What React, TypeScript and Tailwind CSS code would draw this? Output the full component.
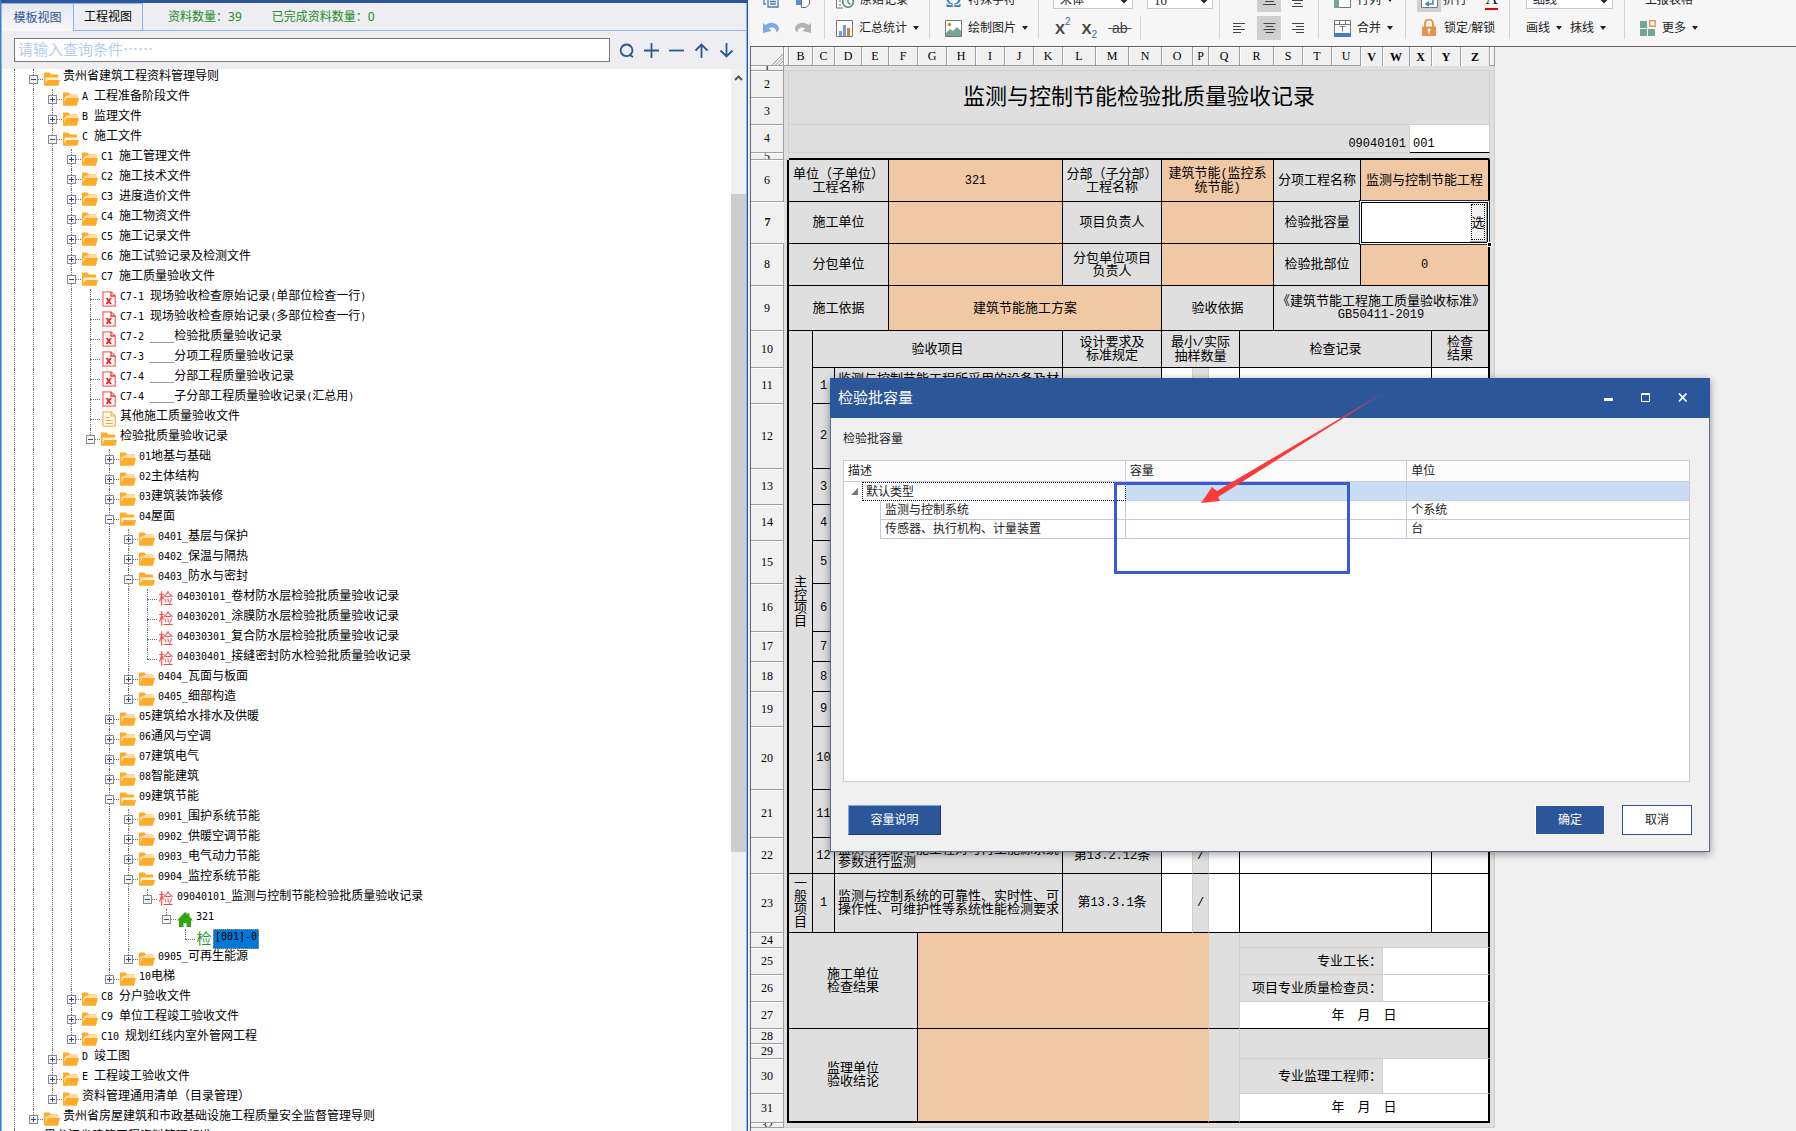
import type { ReactNode } from 'react';
import { clsx } from 'clsx';

type NodeIcon = 'folder' | 'excel' | 'doc' | 'check' | 'checkDone' | 'home';

interface TreeNode {
  level: number;
  text: string;
  icon?: NodeIcon;
  open?: boolean;
  leaf?: boolean;
  selected?: boolean;
}

const tree: TreeNode[] = [
  { level: 1, text: '贵州省建筑工程资料管理导则', open: true },
  { level: 2, text: 'A 工程准备阶段文件' },
  { level: 2, text: 'B 监理文件' },
  { level: 2, text: 'C 施工文件', open: true },
  { level: 3, text: 'C1 施工管理文件' },
  { level: 3, text: 'C2 施工技术文件' },
  { level: 3, text: 'C3 进度造价文件' },
  { level: 3, text: 'C4 施工物资文件' },
  { level: 3, text: 'C5 施工记录文件' },
  { level: 3, text: 'C6 施工试验记录及检测文件' },
  { level: 3, text: 'C7 施工质量验收文件', open: true },
  { level: 4, text: 'C7-1 现场验收检查原始记录(单部位检查一行)', icon: 'excel', leaf: true },
  { level: 4, text: 'C7-1 现场验收检查原始记录(多部位检查一行)', icon: 'excel', leaf: true },
  { level: 4, text: 'C7-2 ____检验批质量验收记录', icon: 'excel', leaf: true },
  { level: 4, text: 'C7-3 ____分项工程质量验收记录', icon: 'excel', leaf: true },
  { level: 4, text: 'C7-4 ____分部工程质量验收记录', icon: 'excel', leaf: true },
  { level: 4, text: 'C7-4 ____子分部工程质量验收记录(汇总用)', icon: 'excel', leaf: true },
  { level: 4, text: '其他施工质量验收文件', icon: 'doc', leaf: true },
  { level: 4, text: '检验批质量验收记录', open: true },
  { level: 5, text: '01地基与基础' },
  { level: 5, text: '02主体结构' },
  { level: 5, text: '03建筑装饰装修' },
  { level: 5, text: '04屋面', open: true },
  { level: 6, text: '0401_基层与保护' },
  { level: 6, text: '0402_保温与隔热' },
  { level: 6, text: '0403_防水与密封', open: true },
  { level: 7, text: '04030101_卷材防水层检验批质量验收记录', icon: 'check', leaf: true },
  { level: 7, text: '04030201_涂膜防水层检验批质量验收记录', icon: 'check', leaf: true },
  { level: 7, text: '04030301_复合防水层检验批质量验收记录', icon: 'check', leaf: true },
  { level: 7, text: '04030401_接缝密封防水检验批质量验收记录', icon: 'check', leaf: true },
  { level: 6, text: '0404_瓦面与板面' },
  { level: 6, text: '0405_细部构造' },
  { level: 5, text: '05建筑给水排水及供暖' },
  { level: 5, text: '06通风与空调' },
  { level: 5, text: '07建筑电气' },
  { level: 5, text: '08智能建筑' },
  { level: 5, text: '09建筑节能', open: true },
  { level: 6, text: '0901_围护系统节能' },
  { level: 6, text: '0902_供暖空调节能' },
  { level: 6, text: '0903_电气动力节能' },
  { level: 6, text: '0904_监控系统节能', open: true },
  { level: 7, text: '09040101_监测与控制节能检验批质量验收记录', icon: 'check', open: true },
  { level: 8, text: '321', icon: 'home', open: true },
  { level: 9, text: '[001]-0', icon: 'checkDone', leaf: true, selected: true },
  { level: 6, text: '0905_可再生能源' },
  { level: 5, text: '10电梯' },
  { level: 3, text: 'C8 分户验收文件' },
  { level: 3, text: 'C9 单位工程竣工验收文件' },
  { level: 3, text: 'C10 规划红线内室外管网工程' },
  { level: 2, text: 'D 竣工图' },
  { level: 2, text: 'E 工程竣工验收文件' },
  { level: 2, text: '资料管理通用清单（目录管理）' },
  { level: 1, text: '贵州省房屋建筑和市政基础设施工程质量安全监督管理导则' },
  { level: 0, text: '黑龙江省建筑工程资料管理标准(DB23/T1019-2020)' },
];

// true when a later row on the same level still belongs to the same parent
function continues(index: number, level: number) {
  for (let i = index + 1; i < tree.length; i++) {
    if (tree[i].level < level) return false;
    if (tree[i].level === level) return true;
  }
  return false;
}

// latin runs are set in a monospace face at half the width of a Chinese character
function Mixed({ text, latin }: { text: string; latin: string }) {
  return text.split(/([\x20-\x7e]+)/).map((part, i) =>
    i % 2 ? (
      <span key={i} className={clsx('leading-none', latin)}>
        {part}
      </span>
    ) : (
      part
    ),
  );
}

const treeLatin = "font-['DejaVu_Sans_Mono'] text-[10px]";
const sheetLatin = "font-['Liberation_Mono'] text-[12px]";

function FolderIcon({ open }: { open?: boolean }) {
  return (
    <svg width="16" height="14" viewBox="0 0 16 14">
      <path d="M0 0.500h5.500l1.500 2H14v11H0z" fill="#ffab2a" />
      {open ? (
        <>
          <path d="M1.500 5.500H15v3H4l-2.500 3z" fill="#fff3dc" />
          <path d="M3.500 8H16l-1.500 5.500H0z" fill="#ffab2a" />
        </>
      ) : (
        <>
          <path d="M6 3h9v3H4L1.500 12V5z" fill="#ffdca6" />
          <path d="M3.500 6H16l-2 7.500H0.500z" fill="#ffab2a" />
        </>
      )}
    </svg>
  );
}

function TreeIcon({ node }: { node: TreeNode }) {
  switch (node.icon) {
    case 'excel':
      return (
        <svg width="16" height="16" viewBox="0 0 16 16" fill="none">
          <path d="M2 .8h8L14.200 5v10.200H2z" stroke="#f66" strokeWidth="1.300" />
          <path d="M10 1v4h4" stroke="#e33" strokeWidth="1.300" />
          <path d="M5.500 7l4.500 6M10 7l-4.500 6" stroke="#e22" strokeWidth="1.800" />
        </svg>
      );
    case 'doc':
      return (
        <svg width="16" height="16" viewBox="0 0 16 16" fill="none">
          <path d="M2 .8h8L14.200 5v10.200H2z" stroke="#ffb54a" strokeWidth="1.300" />
          <path d="M10 1v4h4M4.500 6.500h4M4.500 9.500h7.500M4.500 12.500h7.500" stroke="#ffab2a" strokeWidth="1.200" />
        </svg>
      );
    case 'check':
      return <span className="text-[15px] leading-4 text-[#f04848]">检</span>;
    case 'checkDone':
      return <span className="text-[15px] leading-4 text-[#1f9a2c]">检</span>;
    case 'home':
      return (
        <svg width="16" height="15" viewBox="0 0 16 15">
          <path d="M8 0l2.500 2.500V1.500h2v3L16 8.500h-2V15H9.500v-4h-3v4H2V8.500H0z" fill="#2fa80a" />
        </svg>
      );
    default:
      return <FolderIcon open={node.open} />;
  }
}

function TreeRow({ node, index }: { node: TreeNode; index: number }) {
  const guides = Array.from({ length: node.level }, (_, l) => continues(index, l));
  return (
    <li className="flex h-5 items-center whitespace-nowrap">
      {guides.map((on, l) => (
        <span key={l} className="flex h-5 w-[19px] shrink-0 justify-center">
          {on && <span className="h-5 border-l border-dotted border-[#707070]" />}
        </span>
      ))}
      <span className="relative h-5 w-[19px] shrink-0">
        <span
          className={clsx(
            'absolute left-[9px] top-0 border-l border-dotted border-[#707070]',
            continues(index, node.level) ? 'h-5' : 'h-[10px]',
          )}
        />
        <span className="absolute left-[9px] top-[10px] w-[10px] border-t border-dotted border-[#707070]" />
        {!node.leaf && (
          <button
            aria-label={node.open ? '收起' : '展开'}
            className="absolute left-[5px] top-[6px] h-[9px] w-[9px] border border-[#8a8a8a] bg-[#f6f6f6]"
          >
            <svg width="7" height="7" viewBox="0 0 7 7" className="block">
              <path d={node.open ? 'M1 3.5h5' : 'M1 3.5h5M3.5 1v5'} stroke="#2b4b94" />
            </svg>
          </button>
        )}
      </span>
      <span className="ml-px flex h-4 w-4 shrink-0 items-center justify-center">
        <TreeIcon node={node} />
      </span>
      {node.selected ? (
        <span className="ml-px h-5 border border-dotted border-[#e08a3c] bg-[#0078d7] px-px text-[12px] leading-[12px]">
          <Mixed text={node.text} latin={treeLatin} />
        </span>
      ) : (
        <span className="ml-[3px] self-start text-[12px] leading-[14px]">
          <Mixed text={node.text} latin={treeLatin} />
        </span>
      )}
    </li>
  );
}

function SearchTools() {
  const items: [string, string][] = [
    ['查找', 'M7.500 1.500a5.800 5.800 0 1 0 .1 0zM10 11.500l4 2.500'],
    ['展开全部', 'M7.500 0v15M0 7.500h15'],
    ['收起全部', 'M0 7.500h15'],
    ['上一个', 'M7.500 1v14M1.500 7.500l6-6 6 6'],
    ['下一个', 'M7.500 0v14M1.500 7.500l6 6 6-6'],
  ];
  return (
    <div className="flex gap-[10px]">
      {items.map(([label, d]) => (
        <button key={label} aria-label={label}>
          <svg width="15" height="15" viewBox="0 0 15 15" fill="none" stroke="#2b579a" strokeWidth="1.800">
            <path d={d} />
          </svg>
        </button>
      ))}
    </div>
  );
}

function Sidebar() {
  return (
    <aside className="flex w-[748px] shrink-0 flex-col border-x border-l-[#4a7ac8] border-r-[#2b579a] bg-[#eeedf2]">
      <div className="h-[3px] shrink-0 bg-[#2b579a]" />
      <div className="flex min-h-0 flex-1 flex-col border-x border-[#8fb4ea]">
        <div className="flex h-7 shrink-0 text-[12px]">
          <button className="w-[71px] border-t border-[#8fb4ea] bg-linear-to-b from-[#e6e6ee] to-[#f8f8fb] text-[#2b579a]">
            模板视图
          </button>
          <button className="w-[70px] border border-[#8fb4ea] text-black">工程视图</button>
          <div className="flex flex-1 items-center gap-[30px] border-b border-[#8fb4ea] pl-[25px] text-[#228b22]">
            <span>
              资料数量：<span className="font-['Noto_Sans']">39</span>
            </span>
            <span>
              已完成资料数量：<span className="font-['Noto_Sans']">0</span>
            </span>
          </div>
        </div>
        <div className="flex h-[38px] shrink-0 items-center gap-[9px] px-3">
          <input
            aria-label="查询条件"
            placeholder="请输入查询条件……"
            className="h-6 min-w-0 flex-1 border border-[#7a7a7a] bg-white px-[3px] pb-1 font-['Noto_Sans_CJK_SC',sans-serif] text-[15px] leading-5 placeholder:text-[#b4cdea]"
          />
          <SearchTools />
        </div>
        <div className="flex min-h-0 flex-1 bg-white">
          <ul className="min-w-0 flex-1 overflow-hidden pl-[3px]">
            {tree.map((node, i) => (
              <TreeRow key={i} node={node} index={i} />
            ))}
          </ul>
          <div className="flex w-[15px] shrink-0 flex-col bg-[#f0f0f0]">
            <svg width="15" height="17" viewBox="0 0 15 17" fill="none" stroke="#555" strokeWidth="2">
              <path d="M4 11l3.500-3.500L11 11" />
            </svg>
            <div className="mt-[108px] h-[658px] bg-[#cdcdcd]" />
          </div>
        </div>
      </div>
    </aside>
  );
}

function Caret() {
  return (
    <svg width="6" height="4" viewBox="0 0 6 4">
      <path d="M0 0h6L3 4z" fill="#222" />
    </svg>
  );
}

function Lines({ widths }: { widths: number[] }) {
  return (
    <svg width="13" height="11" viewBox="0 0 13 11" stroke="#444">
      {widths.map((w, i) => (
        <path key={i} d={`M${(13 - w) / 2} ${i * 3 + 0.5}h${w}`} />
      ))}
    </svg>
  );
}

function Group({ width, top, bottom, last }: { width: string; top: ReactNode; bottom: ReactNode; last?: boolean }) {
  return (
    <div className={clsx('flex h-[51px] shrink-0 flex-col gap-1', width, !last && 'border-r border-[#d4d4d4]')}>
      <div className="flex h-6 shrink-0 items-center">{top}</div>
      <div className="flex h-6 shrink-0 items-center">{bottom}</div>
    </div>
  );
}

interface ToolProps {
  icon?: ReactNode;
  text: string;
  caret?: boolean;
  className?: string;
}

function Tool({ icon, text, caret = true, className }: ToolProps) {
  return (
    <button className={clsx('flex items-center gap-[6px] whitespace-nowrap', className)}>
      {icon}
      <span>{text}</span>
      {caret && <Caret />}
    </button>
  );
}

function Toolbar() {
  return (
    <div className="h-[46px] shrink-0 overflow-hidden bg-[#f6f6f6] text-[12px] text-[#222]">
      <div className="-mt-3 flex pl-px">
        <Group
          width="w-[74px]"
          top={
            <div className="flex gap-4 pl-3">
              <button aria-label="复制">
                <svg width="16" height="16" viewBox="0 0 16 16" fill="none" stroke="#4a7ab8" strokeWidth="1.300">
                  <path d="M3 12H1V1h10v2M5 3h10v12H5zM7 7h6M7 9.500h6M7 12h6" />
                </svg>
              </button>
              <button aria-label="粘贴">
                <svg width="16" height="16" viewBox="0 0 16 16">
                  <path d="M1 1h11v12H1z" fill="#5b8fd9" />
                  <path d="M6.500 4.500h8V12L11 15.500H6.500z" fill="#fff" stroke="#667" />
                </svg>
              </button>
            </div>
          }
          bottom={
            <div className="flex gap-4 pl-3">
              <button aria-label="撤销">
                <svg width="16" height="14" viewBox="0 0 16 14">
                  <path d="M0 2l2.500 2C8-.5 15 2.500 16 7c.2 2-1 3.500-2.500 4.500C13.500 7 9 5 6 7.500L8.500 10 0 12z" fill="#7eaaea" />
                </svg>
              </button>
              <button aria-label="重做">
                <svg width="16" height="14" viewBox="0 0 16 14">
                  <path d="M16 2l-2.500 2C8-.5 1 2.500 0 7c-.2 2 1 3.500 2.500 4.500C2.500 7 7 5 10 7.500L7.500 10l8.500 2z" fill="#b2b2b2" />
                </svg>
              </button>
            </div>
          }
        />
        <Group
          width="w-[105px]"
          top={
            <Tool
              className="pl-[11px]"
              caret={false}
              text="原始记录"
              icon={
                <svg width="18" height="18" viewBox="0 0 18 18" fill="none">
                  <path d="M7 17H.5V1H13M3 14h2M3 10h2" stroke="#777" />
                  <circle cx="12" cy="11" r="5.300" stroke="#3f8a6d" strokeWidth="1.500" />
                  <path d="M12 8v3.500l2.500 2" stroke="#3f8a6d" strokeWidth="1.300" />
                </svg>
              }
            />
          }
          bottom={
            <Tool
              className="pl-[11px]"
              text="汇总统计"
              icon={
                <svg width="17" height="17" viewBox="0 0 17 17">
                  <path d="M.5.500h16v16H.5z" fill="#fff" stroke="#777" />
                  <path d="M3 11h3v5H3zM7 5h3v11H7z" fill="#6f9fe0" />
                  <path d="M11 8h3v8h-3z" fill="#dd7e27" />
                </svg>
              }
            />
          }
        />
        <Group
          width="w-[109px]"
          top={
            <Tool
              className="pl-[15px]"
              caret={false}
              text="特殊字符"
              icon={<span className="w-[17px] text-[22px] leading-6 text-[#3f7fb8]">Ω</span>}
            />
          }
          bottom={
            <Tool
              className="pl-[15px]"
              text="绘制图片"
              icon={
                <svg width="17" height="17" viewBox="0 0 17 17">
                  <path d="M.5.500h16v16H.5z" fill="#fff" stroke="#777" />
                  <circle cx="4.500" cy="4.500" r="1.700" fill="#dd7e27" />
                  <path d="M1 16v-3l4-4 3 2 4-4 4 4v5z" fill="#74a593" />
                </svg>
              }
            />
          }
        />
        <Group
          width="w-[181px]"
          top={
            <div className="flex gap-[14px] pl-[14px]">
              <select aria-label="字体" className="h-[18px] w-20 border border-[#c8c8dc] bg-white pl-[2px]">
                <option>宋体</option>
              </select>
              <select aria-label="字号" className="h-[18px] w-[66px] border border-[#c8c8dc] bg-white pl-[2px] text-[13px]">
                <option>10</option>
              </select>
            </div>
          }
          bottom={
            <div className="flex h-6 w-[102px] items-center gap-[11px] border-r border-[#d4d4d4] pl-4 font-['Liberation_Sans'] text-[15px] leading-none text-[#444]">
              <button aria-label="上标" className="flex">
                <b>X</b>
                <span className="-mt-1 text-[10px] text-[#2b6cb8]">2</span>
              </button>
              <button aria-label="下标" className="flex items-end">
                <b>X</b>
                <span className="-mb-1 text-[10px] text-[#2b6cb8]">2</span>
              </button>
              <button aria-label="删除线" className="whitespace-pre text-[14px] line-through">
                {' ab '}
              </button>
            </div>
          }
        />
        <Group
          width="w-[99px]"
          top={
            <div className="flex pl-[37px]">
              <button aria-label="垂直居中" className="flex h-6 w-6 items-center justify-center bg-[#cfcfcf]">
                <Lines widths={[9, 13, 9, 13]} />
              </button>
              <button aria-label="底端对齐" className="flex h-6 w-8 items-center justify-center pt-1">
                <Lines widths={[0, 11, 7, 11]} />
              </button>
            </div>
          }
          bottom={
            <div className="flex pl-[13px]">
              <button aria-label="左对齐" className="flex h-6 w-6 items-center">
                <svg width="13" height="11" viewBox="0 0 13 11" stroke="#444">
                  <path d="M0 .5h12M0 3.500h8M0 6.500h12M0 9.500h8" />
                </svg>
              </button>
              <button aria-label="居中" className="flex h-6 w-6 items-center justify-center bg-[#cfcfcf]">
                <Lines widths={[12, 8, 12, 8]} />
              </button>
              <button aria-label="右对齐" className="flex h-6 w-6 items-center justify-end">
                <svg width="13" height="11" viewBox="0 0 13 11" stroke="#444">
                  <path d="M0 .5h12M4 3.500h8M0 6.500h12M4 9.500h8" />
                </svg>
              </button>
            </div>
          }
        />
        <Group
          width="w-[87px]"
          top={
            <Tool
              className="pl-[15px]"
              text="行列"
              icon={
                <svg width="17" height="17" viewBox="0 0 17 17">
                  <path d="M.5.500h16v15H.5z" fill="#fff" stroke="#777" />
                  <path d="M0 0h5v16H0z" fill="#74a593" />
                </svg>
              }
            />
          }
          bottom={
            <Tool
              className="pl-[15px]"
              text="合并"
              icon={
                <svg width="17" height="17" viewBox="0 0 17 17">
                  <path d="M.5.500h16v16H.5zM.5 4.500h16M5.500.5v4M11.500.5v4" fill="#fff" stroke="#777" />
                  <path d="M5.500 6.500h6M8.500 6.500v5" stroke="#777" />
                  <path d="M0 13h17v4H0z" fill="#3f7fc8" />
                </svg>
              }
            />
          }
        />
        <Group
          width="w-[104px]"
          top={
            <div className="flex items-center pl-[11px]">
              <button aria-label="自动换行" className="flex h-6 w-6 items-center justify-center bg-[#cfcfcf]">
                <svg width="17" height="17" viewBox="0 0 17 17" fill="none">
                  <path d="M.5.500h16v15H.5z" fill="#fff" stroke="#777" />
                  <path d="M4 6h8v6H5M8 9.500L5 12l3 2" stroke="#4a7ac8" strokeWidth="1.500" />
                </svg>
              </button>
              <span className="ml-[2px]">折行</span>
              <button aria-label="字体颜色" className="ml-[18px] h-5 w-[13px] border-b-2 border-red-600 text-[17px] leading-4">
                A
              </button>
            </div>
          }
          bottom={
            <Tool
              className="pl-[15px]"
              caret={false}
              text="锁定/解锁"
              icon={
                <svg width="17" height="18" viewBox="0 0 17 18">
                  <path d="M4 8V4.500a4 4 0 0 1 8 0V8" fill="none" stroke="#e8924a" strokeWidth="2" />
                  <path d="M1 7.500h14V17H1z" fill="#e8924a" />
                  <circle cx="8" cy="11" r="1.500" fill="#fff" />
                  <path d="M7.500 11h1v4h-1z" fill="#fff" />
                </svg>
              }
            />
          }
        />
        <Group
          width="w-[115px]"
          top={
            <select aria-label="线型" className="ml-4 h-[18px] w-[87px] border border-[#c8c8dc] bg-white pl-[2px]">
              <option>细线</option>
            </select>
          }
          bottom={
            <>
              <Tool className="pl-4" text="画线" />
              <Tool className="pl-2" text="抹线" />
            </>
          }
        />
        <Group
          width="w-[120px]"
          last
          top={<Tool className="pl-5" caret={false} text="上报表格" />}
          bottom={
            <Tool
              className="pl-[15px]"
              text="更多"
              icon={
                <svg width="16" height="16" viewBox="0 0 16 16">
                  <path d="M0 1h7v7H0zM0 9h7v7H0zM8 9h7v7H8z" fill="#74a593" />
                  <path d="M9.700.7h5.500v5.500H9.700z" fill="#fff" stroke="#e8924a" strokeWidth="1.400" />
                </svg>
              }
            />
          }
        />
      </div>
    </div>
  );
}

// column widths of the sheet: A .. Z plus the trailing margin column
const colWidths = [
  5, 24, 22, 27, 27, 29, 29, 29, 29, 29, 29, 33, 33, 33, 31, 16, 31, 34, 29, 29, 29, 22, 27, 22, 29, 29, 5,
];
const colNames = ['', ...'BCDEFGHIJKLMNOPQRSTUVWXYZ', ''];
const rowHeights = [
  5, 27, 27, 28, 7, 42, 42, 42, 45, 37, 36, 65, 36, 36, 43, 48, 30, 30, 35, 63, 48, 36, 59, 15, 27, 27, 27, 15, 15, 35,
  29, 5,
];

const kinds = {
  label: 'bg-[#dfdfdf] border-black',
  fill: 'bg-[#f0c8a4] border-black',
  white: 'bg-white border-black',
  faint: 'bg-[#dfdfdf] border-[#d4d0c8]',
  faintWhite: 'bg-white border-[#d4d0c8]',
};

interface Cell {
  c?: number;
  r?: number;
  k: keyof typeof kinds;
  t?: ReactNode;
  x?: string;
}

const br2 = 'border-r-2 border-r-black';
const bb2 = 'border-b-2 border-b-black';

function itemRow(no: string, text: string, clause: string, mark: string): Cell[] {
  return [
    { k: 'label', t: no },
    { c: 8, k: 'label', t: text, x: 'text-left px-[3px]' },
    { c: 3, k: 'label', t: clause },
    { k: 'white', x: 'border-r-[#d4d0c8]' },
    { k: 'label', t: mark, x: 'border-r-[#d4d0c8]' },
    { k: 'white' },
    { c: 7, k: 'white' },
    { c: 2, k: 'white', x: br2 },
  ];
}

function Vertical({ text }: { text: string }) {
  return <div className="mx-auto w-[13px] break-all">{text}</div>;
}

const twoLines = (a: string, b: string) => (
  <>
    <Mixed text={a} latin={sheetLatin} />
    <br />
    <Mixed text={b} latin={sheetLatin} />
  </>
);

const middleItems: [string, string][] = [
  ['2', '第13.2.2条'],
  ['3', '第13.2.3条'],
  ['4', '第13.2.4条'],
  ['5', '第13.2.5条'],
  ['6', '第13.2.6条'],
  ['7', '第13.2.7条'],
  ['8', '第13.2.8条'],
  ['9', '第13.2.9条'],
  ['10', '第13.2.10条'],
  ['11', '第13.2.11条'],
];

const sheet: Cell[][] = [
  [{ c: 27, k: 'faint' }],
  [
    { r: 4, k: 'faint' },
    { c: 25, r: 2, k: 'faint', t: '监测与控制节能检验批质量验收记录', x: 'text-[22px] leading-[30px]' },
    { r: 30, k: 'faint', x: 'border-b-0' },
  ],
  [],
  [
    { c: 22, k: 'faint', t: '09040101', x: 'text-right align-bottom pr-[3px]' },
    { c: 3, k: 'faintWhite', t: '001', x: 'text-left align-bottom pl-[3px] border-b-black' },
  ],
  [{ c: 25, k: 'faint', x: bb2 }],
  [
    { r: 26, k: 'faint', x: clsx(br2, 'border-b-0') },
    { c: 4, k: 'label', t: twoLines('单位（子单位）', '工程名称') },
    { c: 6, k: 'fill', t: '321' },
    { c: 3, k: 'label', t: twoLines('分部（子分部）', '工程名称') },
    { c: 4, k: 'fill', t: twoLines('建筑节能(监控系', '统节能)') },
    { c: 3, k: 'label', t: '分项工程名称' },
    { c: 5, k: 'fill', t: '监测与控制节能工程', x: br2 },
  ],
  [
    { c: 4, k: 'label', t: '施工单位' },
    { c: 6, k: 'fill' },
    { c: 3, k: 'label', t: '项目负责人' },
    { c: 4, k: 'fill' },
    { c: 3, k: 'label', t: '检验批容量' },
    { c: 5, k: 'white', t: <ActiveCell />, x: clsx('relative', br2) },
  ],
  [
    { c: 4, k: 'label', t: '分包单位' },
    { c: 6, k: 'fill' },
    { c: 3, k: 'label', t: twoLines('分包单位项目', '负责人') },
    { c: 4, k: 'fill' },
    { c: 3, k: 'label', t: '检验批部位' },
    { c: 5, k: 'fill', t: '0', x: br2 },
  ],
  [
    { c: 4, k: 'label', t: '施工依据' },
    { c: 9, k: 'fill', t: '建筑节能施工方案' },
    { c: 4, k: 'label', t: '验收依据' },
    { c: 8, k: 'label', t: twoLines('《建筑节能工程施工质量验收标准》', 'GB50411-2019'), x: br2 },
  ],
  [
    { r: 13, k: 'label', t: <Vertical text="主控项目" /> },
    { c: 9, k: 'label', t: '验收项目' },
    { c: 3, k: 'label', t: twoLines('设计要求及', '标准规定') },
    { c: 3, k: 'label', t: twoLines('最小/实际', '抽样数量') },
    { c: 7, k: 'label', t: '检查记录' },
    { c: 2, k: 'label', t: twoLines('检查', '结果'), x: br2 },
  ],
  itemRow('1', '监测与控制节能工程所采用的设备及材料进场验收', '第13.2.1条', '/'),
  ...middleItems.map(([no, clause]) => itemRow(no, '', clause, '/')),
  itemRow('12', '监测与控制节能工程对可再生能源系统参数进行监测', '第13.2.12条', '/'),
  [
    { k: 'label', t: <Vertical text="一般项目" /> },
    ...itemRow('1', '监测与控制系统的可靠性、实时性、可操作性、可维护性等系统性能检测要求', '第13.3.1条', '/'),
  ],
  [
    { c: 5, r: 4, k: 'label', t: twoLines('施工单位', '检查结果') },
    { c: 10, r: 4, k: 'fill', x: 'border-r-[#f0c8a4]' },
    { r: 4, k: 'label', x: 'border-r-[#d4d0c8]' },
    { c: 9, k: 'faint', x: br2 },
  ],
  [
    { c: 5, k: 'faint', t: '专业工长：', x: 'text-right' },
    { c: 4, k: 'faintWhite', x: br2 },
  ],
  [
    { c: 5, k: 'faint', t: '项目专业质量检查员：', x: 'text-right' },
    { c: 4, k: 'faintWhite', x: br2 },
  ],
  [{ c: 9, k: 'white', t: '年　月　日', x: br2 }],
  [
    { c: 5, r: 4, k: 'label', t: twoLines('监理单位', '验收结论'), x: bb2 },
    { c: 10, r: 4, k: 'fill', x: clsx('border-r-[#f0c8a4]', bb2) },
    { r: 4, k: 'label', x: clsx('border-r-[#d4d0c8]', bb2) },
    { c: 9, r: 2, k: 'faint', x: br2 },
  ],
  [],
  [
    { c: 5, k: 'faint', t: '专业监理工程师：', x: 'text-right' },
    { c: 4, k: 'faintWhite', x: br2 },
  ],
  [{ c: 9, k: 'white', t: '年　月　日', x: clsx(br2, bb2) }],
  [{ c: 27, k: 'faint' }],
];

function ActiveCell() {
  return (
    <div className="absolute -inset-x-[2px] -top-[2px] -bottom-[2px] border border-[#1b2f4a] bg-white p-px">
      <div className="flex h-full justify-end border border-black">
        <button className="h-full w-[17px] border-b border-r border-[#a0a0a0] bg-[#f0f0f0] p-px">
          <span className="flex h-full items-center justify-center border border-dotted border-black">选</span>
        </button>
      </div>
      <span className="absolute -bottom-[3px] -right-[3px] h-[5px] w-[5px] border border-white bg-black" />
    </div>
  );
}

function Sheet() {
  return (
    <div className="min-h-0 flex-1 overflow-hidden border-l border-t border-[#646464] bg-[#f0f0f0]">
      <table className="w-[744px] table-fixed border-separate border-spacing-0 text-[13px] leading-[13px] text-black">
        <colgroup>
          <col className="w-[33px]" />
          {colWidths.map((w, i) => (
            <col key={i} style={{ width: w }} />
          ))}
        </colgroup>
        <thead>
          <tr className="h-[19px] text-[12px] leading-3">
            <th className="border-b border-r border-[#a0a0a0] p-0">
              <svg width="32" height="18" viewBox="0 0 32 18" stroke="#999" className="block">
                <path d="M21 18L32 7M24.500 18L32 10.500M28 18l4-4" />
              </svg>
            </th>
            {colNames.map((name, i) => {
              const active = i >= 21 && i <= 25;
              return (
                <th
                  key={i}
                  className={clsx(
                    'border-r border-r-[#a0a0a0] p-0 shadow-[inset_1px_1px_0_#fff]',
                    active ? 'font-bold' : 'border-b border-b-[#a0a0a0] font-normal',
                  )}
                >
                  {name}
                </th>
              );
            })}
          </tr>
        </thead>
        <tbody>
          {sheet.map((cells, i) => (
            <tr key={i} style={{ height: rowHeights[i] }}>
              <th
                className={clsx(
                  'border-b border-[#a0a0a0] bg-[#f0f0f0] p-0 text-[12px] leading-3 shadow-[inset_0_1px_0_#fff]',
                  i === 6 ? 'font-bold' : 'border-r font-normal',
                )}
              >
                <div
                  className="flex items-center justify-center overflow-hidden pb-px"
                  style={{ height: rowHeights[i] - 1 }}
                >
                  {i + 1}
                </div>
              </th>
              {cells.map((cell, j) => (
                <td
                  key={j}
                  colSpan={cell.c}
                  rowSpan={cell.r}
                  className={clsx('border-b border-r p-0 pb-[2px] text-center', kinds[cell.k], cell.x)}
                >
                  {typeof cell.t === 'string' ? <Mixed text={cell.t} latin={sheetLatin} /> : cell.t}
                </td>
              ))}
            </tr>
          ))}
        </tbody>
      </table>
    </div>
  );
}

function CapacityDialog() {
  return (
    <div
      role="dialog"
      aria-label="检验批容量"
      className="absolute left-20 top-[378px] flex h-[474px] w-[880px] flex-col border border-[#5a6b85] bg-[#f0f0f0] text-[12px] shadow-[0_2px_8px_rgba(0,0,0,0.4)]"
    >
      <div className="-mx-px -mt-px flex h-10 shrink-0 items-center bg-[#2b579a] pl-2 pr-[22px] text-white">
        <h2 className="flex-1 text-[15px]">检验批容量</h2>
        <div className="flex gap-[27px]">
          <button aria-label="最小化">
            <svg width="10" height="10" viewBox="0 0 10 10">
              <path d="M0 5h9v3H0z" fill="#fff" />
            </svg>
          </button>
          <button aria-label="最大化">
            <svg width="10" height="10" viewBox="0 0 10 10">
              <path d="M.5 .5h8v8h-8zM0 1.500h9" fill="none" stroke="#fff" />
            </svg>
          </button>
          <button aria-label="关闭">
            <svg width="10" height="10" viewBox="0 0 10 10" stroke="#fff" strokeWidth="1.800">
              <path d="M1 .5l7.500 8M8.500.5L1 8.500" />
            </svg>
          </button>
        </div>
      </div>
      <div className="flex min-h-0 flex-1 flex-col pl-3 pr-[19px] pt-3">
        <p className="leading-[18px] text-[#222]">检验批容量</p>
        <div className="mt-3 h-[322px] border border-[#c9c9dc] bg-white text-[#222]">
          <table className="w-full table-fixed border-separate border-spacing-0 text-left">
            <thead>
              <tr className="h-[21px] bg-[#fcfcfc]">
                <th className="border-b border-r border-[#c9c9dc] py-0 pl-1 pr-0 font-normal">描述</th>
                <th className="border-b border-r border-[#c9c9dc] py-0 pl-1 pr-0 font-normal">容量</th>
                <th className="border-b border-[#c9c9dc] py-0 pl-1 pr-0 font-normal">单位</th>
              </tr>
            </thead>
            <tbody className="leading-[18px]">
              <tr className="h-[19px]">
                <td className="p-0">
                  <div className="flex items-center pl-[7px]">
                    <svg width="7" height="7" viewBox="0 0 7 7">
                      <path d="M7 0v7H0z" fill="#777" />
                    </svg>
                    <div className="ml-1 h-[19px] flex-1 border border-dotted border-black pl-[3px]">默认类型</div>
                  </div>
                </td>
                <td className="border-b border-r border-[#c9c9dc] bg-[#c9ddf4] p-0" />
                <td className="border-b border-[#c9c9dc] bg-[#c9ddf4] p-0" />
              </tr>
              {[
                ['监测与控制系统', '个系统'],
                ['传感器、执行机构、计量装置', '台'],
              ].map(([name, unit]) => (
                <tr key={name} className="h-[19px]">
                  <td className="p-0">
                    <div className="ml-9 h-[19px] border-b border-l border-r border-[#c9c9dc] pl-[4px]">{name}</div>
                  </td>
                  <td className="border-b border-r border-[#c9c9dc] p-0" />
                  <td className="border-b border-[#c9c9dc] py-0 pl-1 pr-0">{unit}</td>
                </tr>
              ))}
            </tbody>
          </table>
        </div>
      </div>
      <div className="flex shrink-0 items-center gap-[17px] pb-4 pl-[17px] pr-[17px]">
        <button className="h-[30px] w-[93px] border border-b-[#1c3d70] border-l-[#7ea6dc] border-r-[#1c3d70] border-t-[#7ea6dc] bg-[#2b579a] text-white">
          容量说明
        </button>
        <button className="ml-auto h-[30px] w-[70px] border border-white bg-[#2b579a] text-white">确定</button>
        <button className="h-[30px] w-[70px] border border-[#2b579a] bg-white text-[#222]">取消</button>
      </div>

      {/* annotations drawn over the dialog */}
      <div className="absolute left-[283px] top-[103px] h-[92px] w-[236px] border-[3px] border-[#3b5bd5]" />
      <svg className="absolute left-[369px] top-[13px]" width="188" height="114" viewBox="0 0 188 114">
        <path d="M185 0L17 99l-5-4L1 111 20 109l-2-4z" fill="#fb3b3b" />
      </svg>
    </div>
  );
}

export default function App() {
  return (
    <main className="flex h-screen w-full gap-[2px] overflow-hidden bg-[#f0f0f0] font-['Liberation_Serif','Noto_Sans_CJK_SC',sans-serif] text-black">
      <Sidebar />
      <section className="relative flex min-w-0 flex-1 flex-col">
        <Toolbar />
        <Sheet />
        <CapacityDialog />
      </section>
    </main>
  );
}
